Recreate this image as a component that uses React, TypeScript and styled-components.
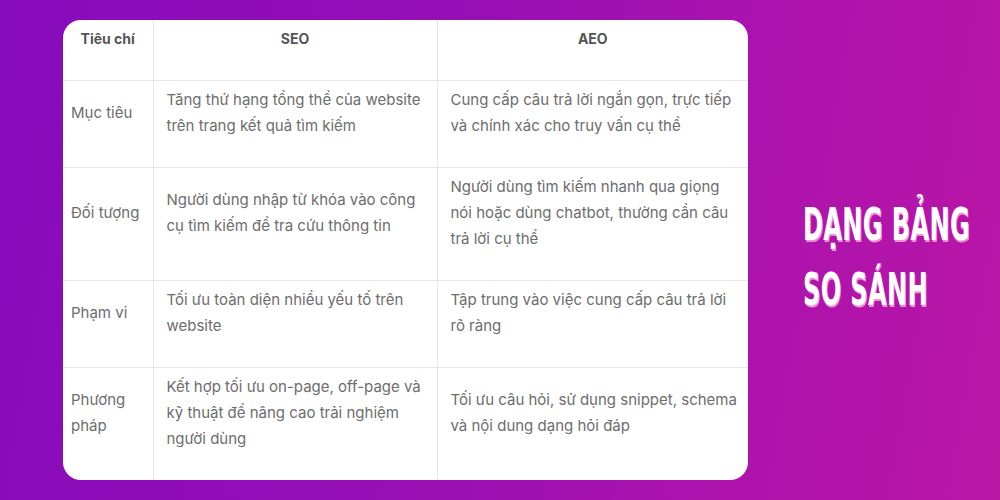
import React from "react";
import styled, { createGlobalStyle } from "styled-components";

const GlobalStyle = createGlobalStyle`
  html, body {
    margin: 0;
    padding: 0;
  }
  body {
    width: 1000px;
    height: 500px;
    overflow: hidden;
    font-family: Inter, "Noto Sans", sans-serif;
  }
`;

const Page = styled.div`
  width: 1000px;
  height: 500px;
  box-sizing: border-box;
  padding: 20px 0 0 63px;
  display: flex;
  align-items: flex-start;
  gap: 55px;
  background: linear-gradient(100deg, #860bbb 0%, #950eb6 40%, #ad13ac 75%, #ba16a6 100%);
`;

const Card = styled.div`
  flex: 0 0 685px;
  width: 685px;
  background: #fff;
  border-radius: 18px;
  overflow: hidden;
`;

const Table = styled.table`
  width: 685px;
  table-layout: fixed;
  border-collapse: collapse;
  border-style: hidden;
`;

const Col = styled.col<{ $w: number }>`
  width: ${(p) => p.$w}px;
`;

const HeadCell = styled.th`
  border: 1px solid #e7e7e7;
  padding: 6px 12px;
  vertical-align: middle;
  text-align: center;
  font-size: 14px;
  font-weight: 700;
  line-height: 26px;
  color: #555;
`;

const Cell = styled.td<{ $first?: boolean }>`
  border: 1px solid #e7e7e7;
  padding: ${(p) => (p.$first ? "6px 10px 6px 8px" : "6px 6px 6px 13px")};
  vertical-align: middle;
  font-size: 15px;
  line-height: 26px;
  color: #6d6d6d;
`;

const CellText = styled.p`
  margin: 0 0 22px;
`;

const Heading = styled.h1`
  flex: 0 0 auto;
  margin: 172px 0 0;
  font-family: "DejaVu Sans Condensed", "DejaVu Sans", sans-serif;
  font-weight: 700;
  font-size: 44px;
  line-height: 65px;
  color: #fff;
  text-shadow: 1.5px 1.5px 0 #ee8fd6;
  white-space: nowrap;
  transform: scaleX(0.61);
  transform-origin: left top;
  letter-spacing: 0.5px;
`;

const rows = [
  {
    label: "Mục tiêu",
    seo: "Tăng thứ hạng tổng thể của website trên trang kết quả tìm kiếm",
    aeo: "Cung cấp câu trả lời ngắn gọn, trực tiếp và chính xác cho truy vấn cụ thể",
  },
  {
    label: "Đối tượng",
    seo: "Người dùng nhập từ khóa vào công cụ tìm kiếm để tra cứu thông tin",
    aeo: "Người dùng tìm kiếm nhanh qua giọng nói hoặc dùng chatbot, thường cần câu trả lời cụ thể",
  },
  {
    label: "Phạm vi",
    seo: "Tối ưu toàn diện nhiều yếu tố trên website",
    aeo: "Tập trung vào việc cung cấp câu trả lời rõ ràng",
  },
  {
    label: "Phương pháp",
    seo: "Kết hợp tối ưu on-page, off-page và kỹ thuật để nâng cao trải nghiệm người dùng",
    aeo: "Tối ưu câu hỏi, sử dụng snippet, schema và nội dung dạng hỏi đáp",
  },
];

const App = () => {
  return (
    <>
      <GlobalStyle />
      <Page>
        <Card>
          <Table>
            <colgroup>
              <Col $w={90} />
              <Col $w={284} />
              <Col $w={311} />
            </colgroup>
            <thead>
              <tr>
                <HeadCell>
                  <CellText>Tiêu chí</CellText>
                </HeadCell>
                <HeadCell>
                  <CellText>SEO</CellText>
                </HeadCell>
                <HeadCell>
                  <CellText>AEO</CellText>
                </HeadCell>
              </tr>
            </thead>
            <tbody>
              {rows.map((r) => (
                <tr key={r.label}>
                  <Cell $first>
                    <CellText>{r.label}</CellText>
                  </Cell>
                  <Cell>
                    <CellText>{r.seo}</CellText>
                  </Cell>
                  <Cell>
                    <CellText>{r.aeo}</CellText>
                  </Cell>
                </tr>
              ))}
            </tbody>
          </Table>
        </Card>
        <Heading>
          DẠNG BẢNG
          <br />
          SO SÁNH
        </Heading>
      </Page>
    </>
  );
};

export default App;
